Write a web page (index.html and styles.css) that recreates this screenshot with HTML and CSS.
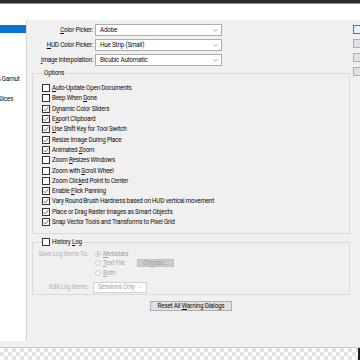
FILE: index.html
```html
<!DOCTYPE html>
<html lang="en">

<head>
    <meta charset="UTF-8" />
    <meta name="viewport" content="width=device-width, initial-scale=1.0" />
    <title>Preferences - General</title>
    <link rel="stylesheet" href="styles.css">
</head>

<body>
    <div class="screen">
        <div class="top-bar"></div>
        <div class="title-bar"></div>

        <div class="dialog-body">
            <!-- left: category list, its left part is outside the capture -->
            <nav class="pref-nav">
                <ul class="pref-nav-list">
                    <li class="active" aria-label="General"></li>
                    <li aria-label="Interface"></li>
                    <li aria-label="File Handling"></li>
                    <li aria-label="Performance"></li>
                    <li aria-label="Cursors"></li>
                    <li>Transparency &amp; Gamut</li>
                    <li aria-label="Units &amp; Rulers"></li>
                    <li>Guides, Grid &amp; Slices</li>
                </ul>
            </nav>

            <main class="pref-main">
                <div class="picker-grid">
                    <label class="field-label"><span><u>C</u>olor Picker:</span></label>
                    <div class="select"><span>Adobe</span>
                        <svg class="chevron" viewBox="0 0 6 4" width="5" height="3"><path d="M0.5 0.5 L3 3 L5.5 0.5" /></svg>
                    </div>
                    <label class="field-label"><span><u>H</u>UD Color Picker:</span></label>
                    <div class="select"><span>Hue Strip (Small)</span>
                        <svg class="chevron" viewBox="0 0 6 4" width="5" height="3"><path d="M0.5 0.5 L3 3 L5.5 0.5" /></svg>
                    </div>
                    <label class="field-label"><span><u>I</u>mage Interpolation:</span></label>
                    <div class="select"><span>Bicubic Automatic</span>
                        <svg class="chevron" viewBox="0 0 6 4" width="5" height="3"><path d="M0.5 0.5 L3 3 L5.5 0.5" /></svg>
                    </div>
                </div>

                <fieldset class="group options">
                    <legend>Options</legend>
                    <ul class="check-list">
                        <li class="check-item"><span class="check-box"></span><span><u>A</u>uto-Update Open Documents</span></li>
                        <li class="check-item"><span class="check-box"></span><span>Beep When <u>D</u>one</span></li>
                        <li class="check-item"><span class="check-box"><svg viewBox="0 0 8 8" width="6" height="6"><path d="M0.8 4.2 L2.9 6.3 L7.2 1.4" /></svg></span><span>D<u>y</u>namic Color Sliders</span></li>
                        <li class="check-item"><span class="check-box"><svg viewBox="0 0 8 8" width="6" height="6"><path d="M0.8 4.2 L2.9 6.3 L7.2 1.4" /></svg></span><span>E<u>x</u>port Clipboard</span></li>
                        <li class="check-item"><span class="check-box"><svg viewBox="0 0 8 8" width="6" height="6"><path d="M0.8 4.2 L2.9 6.3 L7.2 1.4" /></svg></span><span><u>U</u>se Shift Key for Tool Switch</span></li>
                        <li class="check-item"><span class="check-box"><svg viewBox="0 0 8 8" width="6" height="6"><path d="M0.8 4.2 L2.9 6.3 L7.2 1.4" /></svg></span><span>Resize Image During Place</span></li>
                        <li class="check-item"><span class="check-box"><svg viewBox="0 0 8 8" width="6" height="6"><path d="M0.8 4.2 L2.9 6.3 L7.2 1.4" /></svg></span><span>Animated <u>Z</u>oom</span></li>
                        <li class="check-item"><span class="check-box"></span><span>Zoom <u>R</u>esizes Windows</span></li>
                        <li class="check-item"><span class="check-box"></span><span>Zoom with <u>S</u>croll Wheel</span></li>
                        <li class="check-item"><span class="check-box"></span><span>Zoom Clic<u>k</u>ed Point to Center</span></li>
                        <li class="check-item"><span class="check-box"><svg viewBox="0 0 8 8" width="6" height="6"><path d="M0.8 4.2 L2.9 6.3 L7.2 1.4" /></svg></span><span>Enable <u>F</u>lick Panning</span></li>
                        <li class="check-item"><span class="check-box"><svg viewBox="0 0 8 8" width="6" height="6"><path d="M0.8 4.2 L2.9 6.3 L7.2 1.4" /></svg></span><span>Vary Round Brush Hardness based on HUD vertical movement</span></li>
                        <li class="check-item"><span class="check-box"><svg viewBox="0 0 8 8" width="6" height="6"><path d="M0.8 4.2 L2.9 6.3 L7.2 1.4" /></svg></span><span>Place or Drag Raster Images as Smart Objects</span></li>
                        <li class="check-item"><span class="check-box"><svg viewBox="0 0 8 8" width="6" height="6"><path d="M0.8 4.2 L2.9 6.3 L7.2 1.4" /></svg></span><span>Snap Vector Tools and Transforms to Pixel Grid</span></li>
                    </ul>
                </fieldset>

                <fieldset class="group history">
                    <legend class="history-legend"><span class="check-box"></span><span>History <u>L</u>og</span></legend>
                    <div class="history-grid">
                        <span class="field-label muted"><span>Save Log Items To:</span></span>
                        <span class="radio"><span class="radio-dot on"></span><span><u>M</u>etadata</span></span>
                        <span></span>

                        <span></span>
                        <span class="radio"><span class="radio-dot"></span><span><u>T</u>ext File</span></span>
                        <button class="btn btn-disabled">Ch<u>o</u>ose...</button>

                        <span></span>
                        <span class="radio"><span class="radio-dot"></span><span><u>B</u>oth</span></span>
                        <span></span>

                        <span class="field-label muted edit-label"><span>Edit Log Items:</span></span>
                        <div class="select select-disabled"><span>Sessions Only</span>
                            <svg class="chevron" viewBox="0 0 6 4" width="5" height="3"><path d="M0.5 0.5 L3 3 L5.5 0.5" /></svg>
                        </div>
                    </div>
                </fieldset>

                <div class="reset-row">
                    <button class="btn btn-reset">Reset All <u>W</u>arning Dialogs</button>
                </div>
            </main>

            <!-- right: dialog buttons, cut by the capture edge -->
            <div class="side-buttons">
                <button class="btn btn-default" aria-label="OK"></button>
                <button class="btn" aria-label="Cancel"></button>
                <button class="btn" aria-label="Prev"></button>
                <button class="btn" aria-label="Next"></button>
            </div>
        </div>

        <div class="checker-strip">
            <div class="checker"></div>
            <div class="checker-edge"></div>
        </div>
    </div>
</body>

</html>
```

FILE: styles.css
```css
* {
    box-sizing: border-box;
}

body {
    margin: 0;
    background: #f0f0f0;
    font-family: Roboto, "Liberation Sans", Arial, sans-serif;
    font-size: 6.3px;
    letter-spacing: -0.2px;
    color: #0d0d0d;
    overflow: hidden;
}

.screen {
    width: 360px;
    height: 360px;
    display: flex;
    flex-direction: column;
    overflow: hidden;
}

.top-bar {
    flex: 0 0 4px;
    background: #2b2b2b;
    border-bottom: 1px solid #6f98c0;
}

.title-bar {
    flex: 0 0 16px;
    background: #fff;
}

.dialog-body {
    flex: 1;
    display: flex;
    min-height: 0;
}

/* category list */
.pref-nav {
    flex: 0 0 27px;
    background: #fff;
    border-right: 1px solid #d6d6d6;
    margin-bottom: 6px;
    overflow: hidden;
}

.pref-nav-list {
    list-style: none;
    margin: 0 0 0 -40px;
    padding: 4px 0 0;
}

.pref-nav-list li {
    height: 10px;
    padding: 1px 0;
    line-height: 8px;
    white-space: nowrap;
    background-clip: content-box;
}

.pref-nav-list li.active {
    background-color: #0a74d6;
    color: #fff;
}

/* main panel */
.pref-main {
    flex: 1;
    min-width: 0;
    padding: 4px 0 0 5px;
}

.picker-grid {
    display: grid;
    grid-template-columns: 61px 127px;
    grid-auto-rows: 12px;
    column-gap: 2px;
    row-gap: 3px;
}

.field-label {
    display: flex;
    align-items: center;
    justify-content: flex-end;
    white-space: nowrap;
}

.select {
    display: flex;
    align-items: center;
    justify-content: space-between;
    background: #fff;
    border: 1px solid #acacac;
    padding: 0 3px 0 4px;
    white-space: nowrap;
}

.chevron path {
    fill: none;
    stroke: #6a6a6a;
    stroke-width: 0.8;
}

.group {
    margin: 3px 0 0;
    border: 1px solid #d9d9d9;
    min-width: 0;
}

.group legend {
    padding: 0 2px;
    line-height: 8px;
}

.options {
    padding: 0 0 6px 9px;
}

.check-list {
    list-style: none;
    margin: 0;
    padding: 6px 0 0;
}

.check-item {
    height: 10.3px;
    display: flex;
    align-items: center;
    gap: 2px;
    white-space: nowrap;
}

.check-box {
    flex: 0 0 8px;
    width: 8px;
    height: 8px;
    border: 1px solid #333;
    background: #fff;
    display: flex;
    align-items: center;
    justify-content: center;
}

.check-box path {
    fill: none;
    stroke: #222;
    stroke-width: 0.9;
}

/* history log */
.history {
    padding: 2px 0 1px 0;
}

.history .history-legend {
    display: flex;
    align-items: center;
    gap: 2px;
    height: 10px;
    margin-left: 9px;
    padding: 0 2px 0 0;
}

.history-grid {
    display: grid;
    grid-template-columns: 60px 44px 37px;
    grid-template-rows: 9.5px 9.5px 9.5px 15px;
}

.history-grid .field-label {
    padding-right: 5px;
}

.muted {
    color: #b3b3b3;
}

.radio {
    display: flex;
    align-items: center;
    gap: 2px;
    padding-left: 2px;
    color: #a6a6a6;
    white-space: nowrap;
}

.radio-dot {
    width: 6px;
    height: 6px;
    border-radius: 50%;
    border: 1px solid #cdcdcd;
    background: #f8f8f8;
    display: flex;
    align-items: center;
    justify-content: center;
}

.radio-dot.on::after {
    content: "";
    width: 2px;
    height: 2px;
    border-radius: 50%;
    background: #a8a8a8;
}

.edit-label {
    align-self: end;
    height: 11px;
}

.select-disabled {
    grid-column: 2 / span 2;
    align-self: end;
    width: 54px;
    height: 11px;
    border-color: #cfcfcf;
    color: #a3a3a3;
}

.select-disabled .chevron path {
    stroke: #b0b0b0;
}

/* buttons */
.btn {
    font: inherit;
    letter-spacing: inherit;
    color: inherit;
    height: 10px;
    line-height: 8px;
    padding: 0;
    border: 1px solid #adadad;
    background: #e1e1e1;
    white-space: nowrap;
}

.btn-disabled {
    grid-column: 3;
    grid-row: 2;
    align-self: center;
    width: 37px;
    height: 8px;
    line-height: 6px;
    background: #cccccc;
    border-color: #c2c2c2;
    color: #a0a0a0;
}

.reset-row {
    display: flex;
    justify-content: center;
    margin-top: 6px;
}

.btn-reset {
    width: 82px;
}

.side-buttons {
    flex: 0 0 7px;
    margin-left: 3px;
    padding-top: 5px;
    display: flex;
    flex-direction: column;
    gap: 5px;
    overflow: hidden;
}

.side-buttons .btn {
    flex: 0 0 9px;
    width: 40px;
    height: 9px;
}

.side-buttons .btn-default {
    border-color: #2a7ad0;
    background: #e5f1fb;
}

/* transparent canvas below the dialog */
.checker-strip {
    flex: 0 0 13px;
    display: flex;
    border-top: 1px solid #c3cbd2;
}

.checker {
    flex: 1;
    background-color: #fff;
    background-image: conic-gradient(#e2e2e2 25%, #fff 0 50%, #e2e2e2 0 75%, #fff 0);
    background-size: 8px 8px;
}

.checker-edge {
    flex: 0 0 2px;
    background: #1f1f1f;
}
```
